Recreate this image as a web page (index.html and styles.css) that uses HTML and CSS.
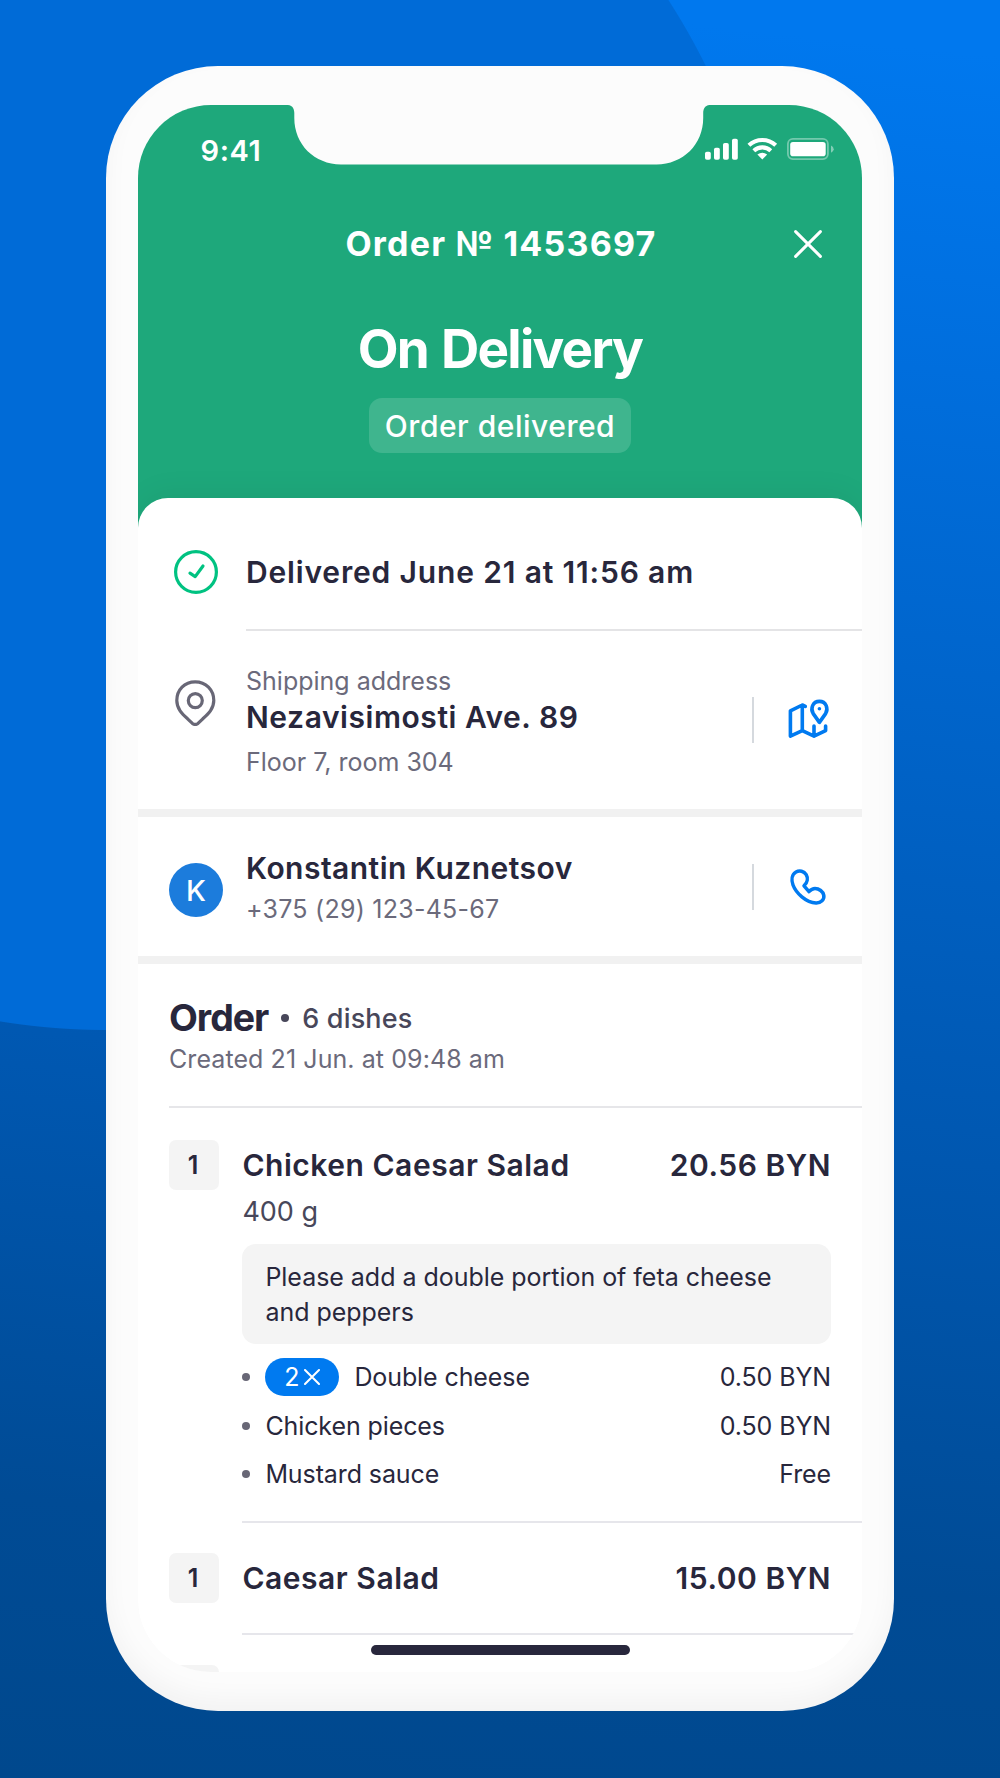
FILE: index.html
```
<!doctype html>
<html lang="en">
<head>
	<meta charset="UTF-8">
	<meta name="viewport" content="width=device-width, initial-scale=1.0">
	<title>Order № 1453697</title>
	<link rel="stylesheet" href="styles.css">
</head>
<body>
	<div class="phone">
		<div class="screen">
			<div class="header">
				<div class="status-bar">
					<span class="time">9:41</span>
					<svg class="status-icons" viewBox="0 0 132 28" fill="#fff">
						<rect x="1" y="15.7" width="5.8" height="8" rx="1.8"/>
						<rect x="10" y="11.7" width="5.8" height="12" rx="1.8"/>
						<rect x="19" y="7" width="5.8" height="16.7" rx="1.8"/>
						<rect x="28" y="2.7" width="5.8" height="21" rx="1.8"/>
						<path d="M44.9 9.3A19.4 19.4 0 0 1 71.7 9.3M49.8 14.7A12.4 12.4 0 0 1 66.8 14.7" fill="none" stroke="#fff" stroke-width="4.1"/>
						<path d="M53.4 18.6Q58.3 14.8 63.2 18.6L58.3 23.4Z"/>
						<rect x="83.9" y="2.9" width="40" height="20.2" rx="5" fill="none" stroke="#fff" stroke-width="1.8" opacity=".38"/>
						<rect x="86.2" y="6" width="35.5" height="14.2" rx="2.8"/>
						<path d="M127 9.6Q129.7 10.8 129.7 13.2T127 16.8Z" opacity=".45"/>
					</svg>
				</div>
				<div class="nav">
					<h2>Order № 1453697</h2>
					<button class="close">
						<svg viewBox="0 0 32 32"><path d="M3.6 3.6L28.4 28.4M28.4 3.6L3.6 28.4"/></svg>
					</button>
				</div>
				<h1>On Delivery</h1>
				<span class="badge">Order delivered</span>
			</div>
			<div class="sheet">
				<div class="row delivered">
					<div class="row-icon">
						<svg viewBox="0 0 48 48" fill="none" stroke="#00c281" stroke-width="3.2" stroke-linecap="round" stroke-linejoin="round">
							<circle cx="24" cy="24" r="20.4"/>
							<path d="M18 25.2L23.2 28.6L31 18"/>
						</svg>
					</div>
					<div class="row-text">
						<p class="title">Delivered June 21 at 11:56 am</p>
					</div>
				</div>
				<div class="row address">
					<div class="row-icon">
						<svg viewBox="0 0 48 48" fill="none" stroke="#686776" stroke-width="3.2" stroke-linejoin="round">
							<path d="M23.2 3.8C12.6 3.8 4.8 11.8 4.8 22.6C4.8 30.8 10 35.8 15.6 40.8L20.4 45.4Q23.2 47.6 26 45.4L30.8 40.8C36.4 35.8 41.8 30.8 41.8 22.6C41.8 11.8 33.8 3.8 23.2 3.8Z"/>
							<circle cx="23.3" cy="22.6" r="7"/>
						</svg>
					</div>
					<div class="row-text">
						<p class="label">Shipping address</p>
						<p class="title">Nezavisimosti Ave. 89</p>
						<p class="label floor">Floor 7, room 304</p>
					</div>
					<div class="action">
						<svg viewBox="0 0 48 48" fill="none" stroke="#007af0" stroke-width="3.6" stroke-linecap="round" stroke-linejoin="round">
							<path d="M21.3 10.4L18.3 9L6.4 14.8V40.2L18.3 34.6L30 40.2L41.6 34.6V30M18.3 9V34.6M30 30V40.2"/>
							<path d="M35.4 26.4L29.2 17.6C26.2 12.6 28.6 5.4 35.4 5.4S44.6 12.6 41.6 17.6Z"/>
							<circle cx="35.4" cy="12.8" r="1.8" fill="#007af0" stroke="none"/>
						</svg>
					</div>
				</div>
				<div class="row client">
					<div class="avatar">K</div>
					<div class="row-text">
						<p class="title">Konstantin Kuznetsov</p>
						<p class="label tel">+375 (29) 123-45-67</p>
					</div>
					<div class="action">
						<svg viewBox="0 0 48 48" fill="none" stroke="#007af0" stroke-width="3.5" stroke-linejoin="round">
							<path d="M20 22.8C23.6 19.5 24.2 15 22.2 11.6C20 8 15.5 7 12 9C7.8 11.5 7.2 17 9 22C12 30 22 39.6 32 40C37 40.2 40.5 36.6 39.8 32.4C39.2 28.5 35 25.5 31 25.5C28.5 25.5 26.5 27 25 28.6Z"/>
						</svg>
					</div>
				</div>
				<div class="order">
					<div class="order-head">
						<h3>Order</h3>
						<i class="dot"></i>
						<span class="dishes">6 dishes</span>
					</div>
					<p class="label created">Created 21 Jun. at 09:48 am</p>
				</div>
				<div class="item">
					<div class="qty">1</div>
					<div class="item-body">
						<div class="item-head">
							<span>Chicken Caesar Salad</span>
							<span class="price">20.56 BYN</span>
						</div>
						<p class="weight">400 g</p>
						<p class="note">Please add a double portion of feta cheese and peppers</p>
						<ul class="extras">
							<li>
								<i class="dot"></i>
								<span class="times">2<svg viewBox="0 0 16 16"><path d="M1 1L15 15M15 1L1 15"/></svg></span>
								<span>Double cheese</span>
								<b>0.50 BYN</b>
							</li>
							<li>
								<i class="dot"></i>
								<span>Chicken pieces</span>
								<b>0.50 BYN</b>
							</li>
							<li>
								<i class="dot"></i>
								<span>Mustard sauce</span>
								<b>Free</b>
							</li>
						</ul>
					</div>
				</div>
				<div class="item short">
					<div class="qty">1</div>
					<div class="item-body">
						<div class="item-head">
							<span>Caesar Salad</span>
							<span class="price">15.00 BYN</span>
						</div>
					</div>
				</div>
				<div class="item short">
					<div class="qty"></div>
				</div>
			</div>
			<div class="home-bar"></div>
		</div>
		<svg class="notch" viewBox="286 104 426 61">
			<path d="M286 104V104.7C291.5 104.7 294.3 107.6 294.3 113V118C294.3 144.5 314.5 164.4 341 164.4H656.5C683 164.4 703.2 144.5 703.2 118V113C703.2 107.6 706 104.7 711.5 104.7V104Z"/>
		</svg>
	</div>
</body>
</html>
```
FILE: styles.css
```
* {
	margin: 0;
	padding: 0;
	box-sizing: border-box;
}
body {
	height: 1778px;
	overflow: hidden;
	font-family: Inter, "Liberation Sans", sans-serif;
	color: #28273c;
	/* big circle over the vertical gradient */
	background:
		radial-gradient(circle at 107px 362px, #006bd7 667.5px, transparent 668.5px),
		linear-gradient(186deg, #0078ee 3%, #006edd 20%, #0065cc 36%, #0057b0 62%, #004b95 85%, #00488d 100%);
}
li {
	list-style: none;
}
svg {
	display: block;
}

.phone {
	position: relative;
	width: 788px;
	height: 1645px;
	margin: 66px auto 0;
	padding: 39px 32px 0;
	border-radius: 112px;
	background-color: #fcfcfc;
	box-shadow: inset 0 -12px 24px rgba(0, 0, 0, .04);
}
.screen {
	position: relative;
	display: flex;
	flex-direction: column;
	height: 1567px;
	border-radius: 73px;
	overflow: hidden;
	background-color: #fff;
}
.notch {
	position: absolute;
	left: 180px;
	top: 38px;
	width: 426px;
	height: 61px;
	fill: #fcfcfc;
}

/* green header */
.header {
	display: flex;
	flex-direction: column;
	align-items: center;
	height: 424px;
	flex-shrink: 0;
	background-color: #1ea87b;
	color: #fff;
}
.status-bar {
	display: flex;
	align-items: center;
	justify-content: space-between;
	width: 100%;
	height: 90px;
	padding: 0 26px 0 62.5px;
}
.time {
	font-size: 29px;
	font-weight: 600;
	letter-spacing: .6px;
}
.status-icons {
	width: 132px;
	height: 28px;
}
.nav {
	display: grid;
	grid-template-columns: 1fr auto 1fr;
	align-items: center;
	width: 100%;
	height: 97px;
	padding: 0 38px;
}
.nav h2 {
	grid-column: 2;
	padding: 0 0 1px 2px;
	font-size: 34px;
	font-weight: 700;
	letter-spacing: 1.22px;
}
.close {
	justify-self: end;
	border: none;
	background: none;
}
.close svg {
	width: 32px;
	height: 32px;
	fill: none;
	stroke: #fff;
	stroke-width: 3;
	stroke-linecap: round;
}
.header h1 {
	margin-top: 25px;
	font-size: 53px;
	line-height: 64px;
	font-weight: 700;
	letter-spacing: -1.75px;
	word-spacing: 2px;
}
.badge {
	height: 54.5px;
	margin-top: 17px;
	padding: 0 15.5px;
	border-radius: 13px;
	font-size: 30px;
	line-height: 56px;
	font-weight: 500;
	letter-spacing: .52px;
	background-color: rgba(255, 255, 255, .15);
}

/* white sheet */
.sheet {
	position: relative;
	flex-shrink: 0;
	margin-top: -30.6px;
	border-radius: 30px 30px 0 0;
	background-color: #fff;
	box-shadow: 0 -6px 30px rgba(0, 0, 0, .05);
}
.row {
	display: flex;
	align-items: flex-start;
	padding-right: 30px;
}
.row-icon {
	width: 74px;
	flex-shrink: 0;
}
.row-icon svg {
	width: 48px;
	height: 48px;
}
.row-text {
	flex: 1;
}
.title {
	font-size: 30px;
	font-weight: 600;
	letter-spacing: .56px;
}
.label {
	font-size: 25px;
	color: #6b6a7b;
	letter-spacing: 0;
}
.delivered {
	height: 132.6px;
	padding: 0 0 0 34px;
}
.delivered .row-icon {
	padding-top: 49.6px;
}
.delivered .row-text {
	height: 100%;
	padding-top: 16.5px;
	border-bottom: 2px solid #e4e4e6;
}
.delivered .title {
	line-height: 115px;
	letter-spacing: .84px;
}
.address {
	height: 186px;
	padding-left: 34px;
	padding-top: 32px;
	border-bottom: 8px solid #f1f1f1;
}
.address .row-icon {
	padding-top: 15px;
}
.address .label {
	line-height: 36px;
}
.address .title {
	line-height: 37px;
}
.address .floor {
	line-height: 52px;
}
.client {
	height: 147px;
	padding-left: 31px;
	padding-top: 31px;
	border-bottom: 8px solid #f1f1f1;
}
.client .title {
	line-height: 40px;
	letter-spacing: .47px;
}
.client .tel {
	line-height: 43px;
	letter-spacing: .25px;
}
.avatar {
	width: 54px;
	height: 54px;
	margin: 15px 23px 0 0;
	border-radius: 50%;
	font-size: 29px;
	line-height: 56px;
	font-weight: 500;
	text-align: center;
	color: #fff;
	background-color: #1c7cdc;
}
.action {
	display: flex;
	align-items: center;
	height: 46px;
	padding-left: 30px;
	border-left: 2px solid #d5d9de;
}
.address .action {
	margin-top: 33.5px;
}
.client .action {
	margin-top: 16px;
}
.action svg {
	width: 48px;
	height: 48px;
}

/* order */
.order {
	height: 144px;
	margin-left: 31px;
	padding-top: 31.5px;
	border-bottom: 2px solid #e6e6e9;
}
.order-head {
	display: flex;
	align-items: center;
	height: 44px;
}
.order h3 {
	font-size: 37.5px;
	letter-spacing: -1.05px;
}
.dot {
	width: 8px;
	height: 8px;
	flex-shrink: 0;
	border-radius: 50%;
	background-color: #686776;
}
.order .dot {
	margin: 1px 13.5px 0 12.5px;
	background-color: #48475a;
}
.dishes {
	padding-top: 1px;
	font-size: 27px;
	font-weight: 500;
	letter-spacing: .17px;
	color: #48475a;
}
.created {
	line-height: 39px;
	letter-spacing: .08px;
}
.item {
	display: flex;
	gap: 23.4px;
	padding: 32px 0 0 31px;
}
.short {
	padding-top: 30px;
}
.qty {
	width: 50px;
	height: 50px;
	flex-shrink: 0;
	border-radius: 7px;
	font-size: 25px;
	line-height: 51px;
	font-weight: 600;
	text-align: center;
	text-indent: -2px;
	background-color: #f4f4f4;
}
.item-body {
	flex: 1;
	padding: 0 31px 23px 0;
	border-bottom: 2px solid #e6e6eb;
}
.short .item-body {
	padding-bottom: 29.5px;
}
.item-head {
	display: flex;
	justify-content: space-between;
	font-size: 30px;
	line-height: 51px;
	font-weight: 600;
	letter-spacing: .53px;
}
.short .item-head {
	height: 50px;
}
.weight {
	font-size: 27px;
	line-height: 42px;
	color: #48475a;
}
.note {
	height: 100px;
	margin-top: 11px;
	padding: 16px 24px 0 23px;
	border-radius: 14px;
	font-size: 25px;
	line-height: 35px;
	letter-spacing: -.03px;
	background-color: #f4f4f4;
}
.extras {
	margin-top: 9px;
	font-size: 25px;
	letter-spacing: -.1px;
}
.extras li {
	display: flex;
	align-items: center;
	height: 48.4px;
}
.extras .dot {
	margin-right: 15px;
}
.extras b {
	margin-left: auto;
	font-weight: 400;
}
.times {
	display: flex;
	align-items: center;
	justify-content: center;
	gap: 4.5px;
	width: 73.5px;
	height: 38.5px;
	margin-right: 15.5px;
	border-radius: 20px;
	color: #fff;
	background-color: #007af0;
}
.times svg {
	width: 16px;
	height: 16px;
	fill: none;
	stroke: #fff;
	stroke-width: 2;
	stroke-linecap: round;
}
.home-bar {
	position: absolute;
	left: 233.4px;
	bottom: 17px;
	width: 259px;
	height: 10px;
	border-radius: 5px;
	background-color: #28273c;
}
```
